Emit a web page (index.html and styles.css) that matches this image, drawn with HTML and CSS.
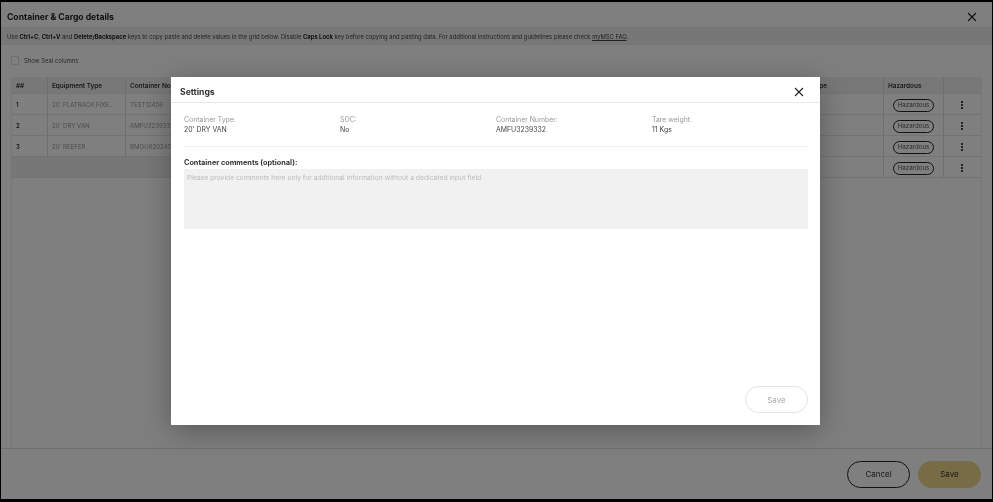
FILE: index.html
```html
<!DOCTYPE html>
<html lang="en">
<head>
<meta charset="utf-8">
<title>Container &amp; Cargo details</title>
<link rel="stylesheet" href="styles.css">
</head>
<body>
<div class="app">
  <header class="head">
    <h1 class="soft">Container &amp; Cargo details</h1>
    <svg class="x" viewBox="0 0 10 10"><path d="M1 1l8 8M9 1l-8 8"/></svg>
  </header>
  <p class="info"><span class="soft">Use <b>Ctrl+C</b>, <b>Ctrl+V</b> and <b>Delete/Backspace</b> keys to copy paste and delete values in the grid below. Disable <b>Caps Lock</b> key before copying and pasting data. For additional instructions and guidelines please check <u>myMSC FAQ</u>.</span></p>
  <main class="content">
    <label class="seal"><span class="box"></span><span class="soft">Show Seal columns</span></label>
    <div class="grid">
      <div class="row hdr">
        <div class="c n soft">##</div><div class="c e soft">Equipment Type</div><div class="c k soft">Container No</div><div class="c m"></div><div class="c f soft">Cargo Type</div><div class="c h soft">Hazardous</div><div class="c a"></div>
      </div>
      <div class="row">
        <div class="c n soft">1</div><div class="c e dim soft">20' FLATRACK FIXE...</div><div class="c k dim soft">TEST12456</div><div class="c m"></div><div class="c f"></div><div class="c h"><span class="pill soft">Hazardous</span></div><div class="c a"><span class="dots"></span></div>
      </div>
      <div class="row">
        <div class="c n soft">2</div><div class="c e dim soft">20' DRY VAN</div><div class="c k dim soft">AMFU3239332</div><div class="c m"></div><div class="c f"></div><div class="c h"><span class="pill soft">Hazardous</span></div><div class="c a"><span class="dots"></span></div>
      </div>
      <div class="row">
        <div class="c n soft">3</div><div class="c e dim soft">20' REEFER</div><div class="c k dim soft">BMOU6202451</div><div class="c m"></div><div class="c f"></div><div class="c h"><span class="pill soft">Hazardous</span></div><div class="c a"><span class="dots"></span></div>
      </div>
      <div class="row">
        <div class="c off n"></div><div class="c off e"></div><div class="c off k"></div><div class="c m"></div><div class="c f"></div><div class="c h"><span class="pill soft">Hazardous</span></div><div class="c a"><span class="dots"></span></div>
      </div>
    </div>
  </main>
  <footer class="foot">
    <button class="btn ghost"><span class="soft">Cancel</span></button>
    <button class="btn gold"><span class="soft">Save</span></button>
  </footer>
</div>
<div class="overlay"></div>
<section class="modal">
  <div class="m-head">
    <h2 class="soft">Settings</h2>
    <svg class="x" viewBox="0 0 10 10"><path d="M1 1l8 8M9 1l-8 8"/></svg>
  </div>
  <div class="m-body">
    <div class="facts">
      <div class="soft"><span>Container Type:</span><strong>20' DRY VAN</strong></div>
      <div class="soft"><span>SOC:</span><strong>No</strong></div>
      <div class="soft"><span>Container Number:</span><strong>AMFU3239332</strong></div>
      <div class="soft"><span>Tare weight:</span><strong>11 Kgs</strong></div>
    </div>
    <h3 class="soft">Container comments (optional):</h3>
    <div class="area"><span class="soft">Please provide comments here only for additional information without a dedicated input field.</span></div>
    <div class="m-foot"><button class="btn off-btn"><span class="soft">Save</span></button></div>
  </div>
</section>
</body>
</html>
```
FILE: styles.css
```css
* { box-sizing: border-box; }
html, body { margin: 0; height: 100%; }
body { background: #000; font-family: Inter, "Liberation Sans", sans-serif; overflow: hidden; }
.soft { filter: blur(.3px); }
.app { position: absolute; inset: 2px 1px 3px 1px; background: #fff; display: flex; flex-direction: column; color: #222; }
.head { height: 26px; flex: none; display: flex; align-items: center; justify-content: space-between; padding: 4px 15px 0 6px; border-bottom: 1px solid #e8e8e8; }
.head h1 { margin: 0; font-size: 8.6px; font-weight: 700; }
.x { display: block; width: 10px; height: 10px; fill: none; stroke: #222; stroke-width: 1.1; }
.info { margin: 0; height: 17px; flex: none; padding: 1px 0 0 6px; line-height: 16px; font-size: 5.87px; background: #eee; color: #444; white-space: nowrap; }
.info b { color: #222; }
.content { flex: 1; padding: 0 10px; min-height: 0; }
.seal { display: flex; align-items: center; gap: 5px; height: 32px; padding-bottom: 2px; font-size: 5.9px; color: #555; }
.box { width: 8px; height: 9px; border: 1px solid #ddd; border-radius: 1px; }
.grid { height: 371px; border: 1px solid #eee; border-top: 0; border-bottom: 0; }
.row { display: flex; height: 21px; border-bottom: 1px solid #e6e6e6; }
.row.hdr { height: 17px; background: #f0f0f0; border-radius: 2px 2px 0 0; }
.c { display: flex; align-items: center; padding: 1px 0 0 4px; font-size: 6px; border-right: 1px solid #ddd; font-weight: 600; color: #333; white-space: nowrap; overflow: hidden; }
.hdr .c { font-size: 6.4px; }
.c.dim { font-weight: 400; font-size: 6.1px; color: #999; }
.c.off { background: #eee; border-right: 0; }
.n { width: 36px; flex: none; }
.e { width: 78px; flex: none; }
.k { width: 60px; flex: none; }
.m { flex: 1; border-right: 0; padding: 0; }
.f { width: 100px; flex: none; padding-left: 0; justify-content: flex-end; padding-right: 56px; }
.h { width: 60px; flex: none; padding-left: 4px; }
.a { width: 37px; flex: none; border-right: 0; justify-content: center; padding: 1px 2px 0 0; }
.row:not(.hdr) .h { padding: 2px 0 0 9px; }
.pill { display: block; width: 41px; height: 13px; border: 1.2px solid #222; border-radius: 7px; text-align: center; line-height: 10.6px; font-size: 6.2px; font-weight: 400; color: #555; }
.dots { width: 2px; height: 2px; background: #444; box-shadow: 0 3px 0 #444, 0 -3px 0 #444; }
.foot { height: 51px; flex: none; border-top: 1px solid #e0e0e0; display: flex; justify-content: flex-end; align-items: center; gap: 8px; padding: 0 11px 0 0; }
.btn { width: 63px; height: 27px; border-radius: 14px; font: 400 8px Inter, "Liberation Sans", sans-serif; padding: 0; }
.ghost { background: #fff; border: 1.2px solid #222; color: #333; }
.gold { background: #efd98b; border: 0; color: #333; }
.overlay { position: absolute; inset: 0; background: rgba(0, 0, 0, .5); }
.modal { position: absolute; left: 171px; top: 77px; width: 649px; height: 348px; background: #fff; color: #333; display: flex; flex-direction: column; box-shadow: 0 6px 28px rgba(0, 0, 0, .3); }
.m-head { height: 26px; flex: none; display: flex; align-items: center; justify-content: space-between; padding: 4px 16px 0 9px; border-bottom: 1px solid #e8e8e8; }
.m-head h2 { margin: 0; font-size: 8.6px; font-weight: 700; }
.m-body { flex: 1; display: flex; flex-direction: column; padding: 0 12px 12px 13px; }
.facts { display: grid; grid-template-columns: repeat(4, 156px); height: 44px; padding-top: 12px; border-bottom: 1px solid #eee; font-size: 6.9px; }
.facts span { display: block; color: #999; line-height: 10px; }
.facts strong { display: block; font-weight: 400; color: #444; line-height: 10px; }
.m-body h3 { margin: 11px 0 1px; font-size: 7.3px; line-height: 10px; font-weight: 700; color: #333; }
.area { height: 60px; background: #f1f1f1; padding: 4px 3px; font-size: 6.75px; line-height: 10px; color: #bbb; }
.m-foot { margin-top: auto; display: flex; justify-content: flex-end; }
.off-btn { background: #fff; border: 1.5px solid #e2e2e2; color: #aaa; }
```
